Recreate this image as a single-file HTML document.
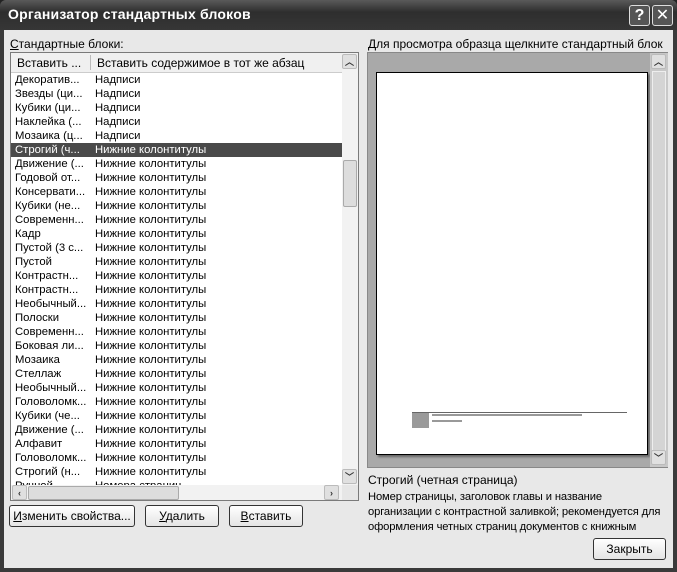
<!DOCTYPE html>
<html><head><meta charset="utf-8"><style>
*{margin:0;padding:0;box-sizing:border-box}
body{width:677px;height:572px;overflow:hidden;background:#222;font-family:"Liberation Sans","DejaVu Sans",sans-serif;font-size:11.3px;color:#000;position:relative}
.win{position:absolute;left:0;top:0;width:677px;height:572px;background:#3a3a3a;border-radius:6px 6px 0 0}
.title{position:absolute;left:0;top:0;width:677px;height:30px;background:linear-gradient(#5a5a5a,#2e2e2e 40%,#363636);border-radius:6px 6px 0 0}
.title span{position:absolute;left:8px;top:6px;color:#fff;font-weight:bold;font-size:14px;letter-spacing:0.2px}
.tb{position:absolute;top:5px;width:21px;height:21px;border:1px solid #ddd;border-radius:3px;background:#555;color:#fff;font-weight:bold;font-size:16px;text-align:center;line-height:19px}
.body{position:absolute;left:4px;top:30px;width:669px;height:538px;background:#e8e8e8}
.abs{position:absolute}
.list{position:absolute;left:10px;top:52px;width:349px;height:449px;background:#fff;border:1px solid #7a7a7a;overflow:hidden}
.hdr{position:absolute;left:0;top:0;width:331px;height:20px;background:#f0f0f0;border-bottom:1px solid #ccc}
.row{position:absolute;left:0;height:14px;width:331px;line-height:14px;white-space:nowrap}
.row .a{position:absolute;left:4px}
.row .b{position:absolute;left:84px}
.sel{background:#4a4a4a;color:#fff}
.vs{position:absolute;right:0;top:0;width:16px;height:432px;background:#f2f2f2}
.btn{position:absolute;height:22px;border:1px solid #333;border-radius:3px;background:linear-gradient(#fff,#e4e4e4);text-align:center;line-height:20px;font-size:12px}
.arr{position:absolute;width:15px;height:15px;border:1px solid #bbb;border-radius:2px;background:#e0e0e0;font-size:9px;text-align:center;line-height:14px;color:#333;font-weight:bold}
</style></head><body>
<div class="win">
<div class="title"><span>Организатор стандартных блоков</span>
<div class="tb" style="left:629px">?</div><div class="tb" style="left:652px">✕</div></div>
</div>
<div class="body"></div>
<div class="abs" style="left:10px;top:37px;font-size:12px"><u>С</u>тандартные блоки:</div>
<div class="list">
<div class="hdr"><span class="abs" style="left:6px;top:3px;font-size:12px">Вставить ...</span><span class="abs" style="left:79px;top:2px;width:1px;height:15px;background:#bbb"></span><span class="abs" style="left:86px;top:3px;font-size:12px">Вставить содержимое в тот же абзац</span></div>
<div id="rows"></div>
<div class="vs"><div class="arr" style="left:0;top:1px">︿</div>
<div class="abs" style="left:1px;top:107px;width:14px;height:47px;background:#ddd;border:1px solid #aaa;border-radius:2px"></div>
<div class="arr" style="left:0;top:416px">﹀</div></div>
<div class="abs" style="left:0;top:432px;width:331px;height:16px;background:#f2f2f2">
<div class="arr" style="left:1px;top:0">‹</div>
<div class="abs" style="left:17px;top:1px;width:151px;height:14px;background:#ddd;border:1px solid #aaa;border-radius:2px"></div>
<div class="arr" style="left:313px;top:0">›</div></div>
<div class="abs" style="left:331px;top:432px;width:18px;height:17px;background:#e6e6e6"></div>
</div>
<div class="btn" style="left:9px;top:505px;width:126px"><u>И</u>зменить свойства...</div>
<div class="btn" style="left:145px;top:505px;width:74px"><u>У</u>далить</div>
<div class="btn" style="left:229px;top:505px;width:74px"><u>В</u>ставить</div>
<div class="abs" style="left:368px;top:37px;font-size:12px">Для просмотра образца щелкните стандартный блок</div>
<div class="abs" style="left:367px;top:52px;width:301px;height:416px;background:#a9a9a9;border:1px solid #888">
<div class="abs" style="left:8px;top:19px;width:272px;height:383px;background:#fff;border:1px solid #000;box-shadow:2px 2px 2px #666">
<div class="abs" style="left:35px;top:339px;width:215px;height:1px;background:#666"></div>
<div class="abs" style="left:35px;top:340px;width:17px;height:15px;background:#9a9a9a"></div>
<div class="abs" style="left:55px;top:341px;width:150px;height:2px;background:#999"></div>
<div class="abs" style="left:55px;top:347px;width:30px;height:2px;background:#999"></div>
</div>
<div class="abs" style="left:282px;top:0;width:18px;height:414px;background:#c8c8c8">
<div class="arr" style="left:1px;top:1px">︿</div>
<div class="abs" style="left:2px;top:18px;width:14px;height:380px;background:#d4d4d4;border:1px solid #eee"></div>
<div class="arr" style="left:1px;top:397px">﹀</div></div>
</div>
<div class="abs" style="left:368px;top:473px;font-size:12px">Строгий (четная страница)</div>
<div class="abs" style="left:368px;top:490px;font-size:11.2px;letter-spacing:-0.12px;line-height:15px;width:305px;height:45px;overflow:hidden;white-space:nowrap">Номер страницы, заголовок главы и название<br>организации с контрастной заливкой; рекомендуется для<br>оформления четных страниц документов с книжным</div>
<div class="btn" style="left:593px;top:538px;width:73px">Закрыть</div>
<script>
var d=[["Декоратив...","Надписи"],["Звезды (ци...","Надписи"],["Кубики (ци...","Надписи"],["Наклейка (...","Надписи"],["Мозаика (ц...","Надписи"],["Строгий (ч...","Нижние колонтитулы"],["Движение (...",""],["Годовой от...",""],["Консервати...",""],["Кубики (не...",""],["Современн...",""],["Кадр",""],[" Пустой (3 с...",""],[" Пустой",""],["Контрастн...",""],["Контрастн...",""],["Необычный...",""],["Полоски",""],["Современн...",""],["Боковая ли...",""],["Мозаика",""],["Стеллаж",""],["Необычный...",""],["Головоломк...",""],["Кубики (че...",""],["Движение (...",""],["Алфавит",""],["Головоломк...",""],["Строгий (н...",""],["Ручной","Номера страниц"]];
var h="";d.forEach(function(r,i){h+='<div class="row'+(i==5?' sel':'')+'" style="top:'+(20+i*14)+'px"><span class="a">'+r[0]+'</span><span class="b">'+(r[1]||"Нижние колонтитулы")+'</span></div>';});
document.getElementById("rows").innerHTML=h;
</script>
</body></html>
